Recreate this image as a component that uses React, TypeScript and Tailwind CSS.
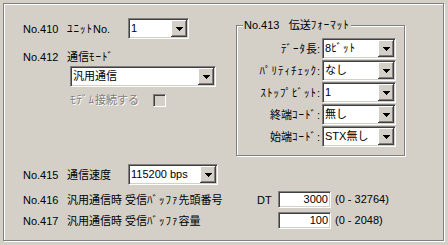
import { ReactNode } from 'react';

const sunken =
  'border border-t-[#808080] border-l-[#808080] border-b-white border-r-white shadow-[inset_1px_1px_0_#404040,inset_-1px_-1px_0_#d4d0c8] p-[1px]';
const etched = 'border border-[#808080] shadow-[1px_1px_0_#fff,inset_1px_1px_0_#fff]';

// half-width katakana are narrow in Noto, so space them out a bit
function T({ s }: { s: string }) {
  const parts = s.split(/([\uFF61-\uFF9F]+)/);
  return (
    <>
      {parts.map((p, i) =>
        /[\uFF61-\uFF9F]/.test(p) ? (
          <span key={i} className="tracking-[1px]">
            {p}
          </span>
        ) : (
          <span key={i}>{p}</span>
        ),
      )}
    </>
  );
}

function Arrow() {
  return (
    <svg width="7" height="4" viewBox="0 0 7 4" shapeRendering="crispEdges">
      <rect x="0" y="0" width="7" height="1" fill="#000" />
      <rect x="1" y="1" width="5" height="1" fill="#000" />
      <rect x="2" y="2" width="3" height="1" fill="#000" />
      <rect x="3" y="3" width="1" height="1" fill="#000" />
    </svg>
  );
}

function Combo({ width, value }: { width: string; value: string }) {
  return (
    <div className={`flex h-[21px] shrink-0 bg-white ${sunken} ${width}`}>
      <div className="flex flex-1 items-center overflow-hidden whitespace-nowrap bg-white pl-[1px] leading-none">
        <T s={value} />
      </div>
      <div className="flex h-full w-[16px] items-center justify-center bg-[#d4d0c8] pt-[1px] shadow-[inset_-1px_-1px_0_#404040,inset_1px_1px_0_#fff,inset_-2px_-2px_0_#808080]">
        <Arrow />
      </div>
    </div>
  );
}

function NumBox({ value }: { value: string }) {
  return (
    <div className={`flex h-[17px] w-[53px] shrink-0 items-center justify-end bg-white pr-[2px] leading-none ${sunken}`}>
      {value}
    </div>
  );
}

function Label({ width, children }: { width: string; children: ReactNode }) {
  return <div className={`shrink-0 whitespace-nowrap leading-[14px] ${width}`}>{children}</div>;
}

const formatRows = [
  { label: 'ﾃﾞｰﾀ長:', value: '8ﾋﾞｯﾄ' },
  { label: 'ﾊﾟﾘﾃｨﾁｪｯｸ:', value: 'なし' },
  { label: 'ｽﾄｯﾌﾟﾋﾞｯﾄ:', value: '1' },
  { label: '終端ｺｰﾄﾞ:', value: '無し' },
  { label: '始端ｺｰﾄﾞ:', value: 'STX無し' },
];

export default function App() {
  return (
    <div className="h-[245px] w-[448px] bg-[#d4d0c8] p-[3px] font-['Liberation_Sans','Noto_Sans_CJK_JP',sans-serif] text-[11px] text-black">
      <div className={`h-[238px] w-[441px] ${etched}`}>
        <div className="flex items-start pt-[14px]">
          <div className="w-[232px] pl-[19px]">
            <div className="flex h-[21px] items-center">
              <Label width="w-[44px]">No.410</Label>
              <Label width="w-[61px]">
                <T s="ﾕﾆｯﾄNo." />
              </Label>
              <Combo width="w-[61px]" value="1" />
            </div>
            <div className="mt-[11px] flex items-center">
              <Label width="w-[44px]">No.412</Label>
              <Label width="w-[61px]">
                <T s="通信ﾓｰﾄﾞ" />
              </Label>
            </div>
            <div className="ml-[47px] mt-[2px]">
              <Combo width="w-[146px]" value="汎用通信" />
            </div>
            <div className="ml-[47px] mt-[6px] flex items-center">
              <Label width="w-[83px]">
                <span className="text-[#808080] [text-shadow:1px_1px_0_#fff]">
                  <T s="ﾓﾃﾞﾑ接続する" />
                </span>
              </Label>
              <div className={`h-[13px] w-[13px] bg-[#d4d0c8] ${sunken}`} />
            </div>
          </div>

          <div className={`relative mt-[7px] w-[169px] pb-[8px] pr-[8px] pt-[12px] ${etched}`}>
            <div className="absolute left-[6px] top-[-8px] whitespace-nowrap bg-[#d4d0c8] px-[1px] leading-[14px]">
              No.413&nbsp;&nbsp;&nbsp;
              <T s="伝送ﾌｫｰﾏｯﾄ" />
            </div>
            <div className="flex flex-col gap-[1px]">
              {formatRows.map(row => (
                <div key={row.label} className="flex items-center justify-end gap-[2px]">
                  <Label width="">
                    <T s={row.label} />
                  </Label>
                  <Combo width="w-[74px]" value={row.value} />
                </div>
              ))}
            </div>
          </div>
        </div>

        <div className="mt-[8px] flex h-[21px] items-center pl-[19px]">
          <Label width="w-[44px]">No.415</Label>
          <Label width="w-[61px]">通信速度</Label>
          <Combo width="w-[90px]" value="115200 bps" />
        </div>

        <div className="mt-[6px] flex items-center pl-[19px]">
          <Label width="w-[44px]">No.416</Label>
          <Label width="w-[190px]">
            <T s="汎用通信時 受信ﾊﾞｯﾌｧ先頭番号" />
          </Label>
          <Label width="w-[21px]">DT</Label>
          <NumBox value="3000" />
          <div className="ml-[4px] whitespace-nowrap">(0 - 32764)</div>
        </div>

        <div className="mt-[4px] flex items-center pl-[19px]">
          <Label width="w-[44px]">No.417</Label>
          <Label width="w-[190px]">
            <T s="汎用通信時 受信ﾊﾞｯﾌｧ容量" />
          </Label>
          <Label width="w-[21px]"></Label>
          <NumBox value="100" />
          <div className="ml-[4px] whitespace-nowrap">(0 - 2048)</div>
        </div>
      </div>
    </div>
  );
}
